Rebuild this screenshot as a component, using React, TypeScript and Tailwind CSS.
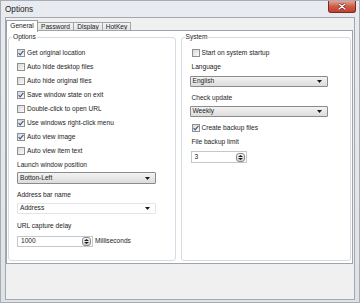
import React from 'react';
import clsx from 'clsx';

const Check = ({ checked }: { checked?: boolean }) => (
  <span className="w-[8px] h-[8px] shrink-0 border border-[#8e8f8f] bg-linear-to-br from-[#d8d8d8] to-[#fbfbfb] flex items-center justify-center">
    {checked && (
      <svg width="6" height="6" viewBox="0 0 6 6">
        <path d="M0.6 3.1 L2.2 4.8 L5.4 0.8" stroke="#3b5a9a" strokeWidth="1.2" fill="none" />
      </svg>
    )}
  </span>
);

const CheckRow = ({ label, checked, className }: { label: string; checked?: boolean; className?: string }) => (
  <div className={clsx('h-[14px] flex items-center gap-[2px]', className)}>
    <Check checked={checked} />
    <span>{label}</span>
  </div>
);

const Label = ({ text, className }: { text: string; className?: string }) => (
  <div className={clsx('h-[14px] flex items-center', className)}>{text}</div>
);

const Arrow = () => (
  <svg width="5" height="3" viewBox="0 0 5 3">
    <path d="M0 0 H5 L2.5 3 Z" fill="#1a1a1a" />
  </svg>
);

const Combo = ({ value, white, className }: { value: string; white?: boolean; className?: string }) => (
  <div
    className={clsx(
      'h-[11px] flex items-center justify-between pl-[2px] pr-[5px] border rounded-[1px]',
      white ? 'bg-white border-[#e1e6eb]' : 'bg-linear-to-b from-[#f3f3f3] to-[#dcdcdc] border-[#8b8b8b]',
      className,
    )}
  >
    <span>{value}</span>
    <Arrow />
  </div>
);

const Spin = ({ value, className }: { value: string; className?: string }) => (
  <div className={clsx('bg-white border border-[#c4c8cd] flex items-center justify-between pl-[3px] pr-[1px]', className)}>
    <span>{value}</span>
    <span className="w-[9px] h-[9px] rounded-[3px] border border-[#8a8a8a] bg-linear-to-b from-[#f6f6f6] to-[#d2d2d2] flex flex-col items-center justify-center gap-[1px]">
      <svg width="5" height="2" viewBox="0 0 5 2">
        <path d="M0 2 H5 L2.5 0 Z" fill="#1a1a1a" />
      </svg>
      <svg width="5" height="2" viewBox="0 0 5 2">
        <path d="M0 0 H5 L2.5 2 Z" fill="#1a1a1a" />
      </svg>
    </span>
  </div>
);

const Group = ({ title, children, className }: { title: string; children: React.ReactNode; className?: string }) => (
  <div className={clsx('relative flex-1 border border-[#d3dce3] rounded-[3px] pt-[8px]', className)}>
    <span className="absolute -top-[5px] left-[3px] px-[1px] bg-white leading-[8px]">{title}</span>
    {children}
  </div>
);

const tabs = ['General', 'Password', 'Display', 'HotKey'];

export default function App() {
  return (
    <div className="w-[360px] h-[303px] flex flex-col bg-linear-to-b from-[#e8ebef] to-[#dfe3e8] border border-[#a7adb4] font-['Liberation_Sans',sans-serif] text-[6.6px] leading-none text-[#1c1c1c]">
      {/* title bar */}
      <div className="h-[16px] flex items-start justify-between pl-[4px] pr-[3px]">
        <span className="mt-[5px] text-[8.2px] text-[#222]">Options</span>
        <span className="w-[28px] h-[12px] rounded-b-[3px] border border-[#7a2a22] border-t-0 bg-linear-to-b from-[#e8a093] via-[#cf5a47] to-[#c2402e] flex items-center justify-center">
          <svg width="8" height="7" viewBox="0 0 8 7">
            <path d="M1 1 L7 6 M7 1 L1 6" stroke="#5a1a12" strokeWidth="2.6" strokeLinecap="round" />
            <path d="M1 1 L7 6 M7 1 L1 6" stroke="#ffffff" strokeWidth="1.5" strokeLinecap="round" />
          </svg>
        </span>
      </div>

      {/* client area */}
      <div className="flex-1 ml-[4px] mr-[4px] mb-[2px] border border-[#a3a8ae] bg-[#f0f0f0] flex flex-col">
        {/* tabs */}
        <div className="h-[13px] flex items-start">
          {tabs.map((t, i) =>
            i === 0 ? (
              <div
                key={t}
                className="relative z-10 mt-[2px] h-[12px] w-[32px] bg-white border border-b-0 border-[#9a9ea4] flex items-center justify-center pb-[1px]"
              >
                {t}
              </div>
            ) : (
              <div
                key={t}
                className={clsx(
                  'mt-[4px] h-[9px] bg-linear-to-b from-[#f4f4f4] to-[#e2e2e2] border border-l-0 border-b-0 border-[#a2a6ab] flex items-center justify-center',
                  i === 1 && 'w-[36px]',
                  i === 2 && 'w-[29px]',
                  i === 3 && 'w-[28px]',
                )}
              >
                {t}
              </div>
            ),
          )}
        </div>

        {/* tab page */}
        <div className="h-[234px] mr-[1px] -mt-[1px] bg-white border border-[#a0a4a8] pt-[6px] pb-[2px] px-[1px] flex gap-[5px]">
          <Group title="Options" className="pl-[8px] pr-[19px]">
            <CheckRow label="Get original location" checked />
            <CheckRow label="Auto hide desktop files" />
            <CheckRow label="Auto hide original files" />
            <CheckRow label="Save window state on exit" checked />
            <CheckRow label="Double-click to open URL" />
            <CheckRow label="Use windows right-click menu" checked />
            <CheckRow label="Auto view image" checked />
            <CheckRow label="Auto view item text" />
            <Label text="Launch window position" />
            <Combo value="Botton-Left" className="h-[12px]" />
            <Label text="Address bar name" className="mt-[4px]" />
            <Combo value="Address" white className="mt-[1px]" />
            <Label text="URL capture delay" className="mt-[5px]" />
            <div className="mt-[3px] flex items-center gap-[2px]">
              <Spin value="1000" className="w-[76px] h-[11px]" />
              <span>Milliseconds</span>
            </div>
          </Group>
          <Group title="System" className="pl-[8px] pr-[22px]">
            <CheckRow label="Start on system startup" className="pl-[2px]" />
            <Label text="Language" className="pl-[2px]" />
            <Combo value="English" className="mt-[2px]" />
            <Label text="Check update" className="mt-[4px] pl-[2px]" />
            <Combo value="Weekly" className="mt-[1px]" />
            <CheckRow label="Create backup files" checked className="mt-[4px] pl-[2px]" />
            <Label text="File backup limit" className="pl-[2px]" />
            <Spin value="3" className="mt-[2px] ml-[1px] w-[56px] h-[12px]" />
          </Group>
        </div>
      </div>
    </div>
  );
}
